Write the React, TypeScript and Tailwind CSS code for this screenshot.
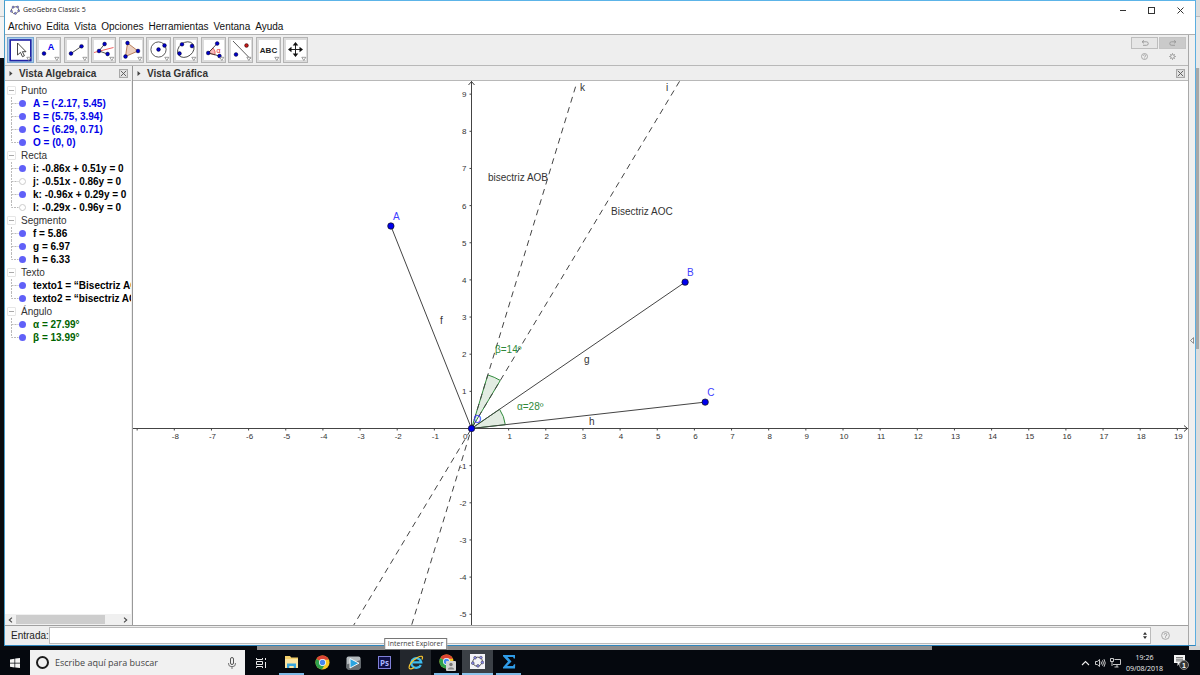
import React, { useState } from "react";

const menus = ["Archivo", "Edita", "Vista", "Opciones", "Herramientas", "Ventana", "Ayuda"];

const groups = [
  {
    name: "Punto",
    color: "text-[#0000e8]",
    items: [
      { text: "A = (-2.17, 5.45)", on: true },
      { text: "B = (5.75, 3.94)", on: true },
      { text: "C = (6.29, 0.71)", on: true },
      { text: "O = (0, 0)", on: true },
    ],
  },
  {
    name: "Recta",
    color: "text-black",
    items: [
      { text: "i: -0.86x + 0.51y = 0", on: true },
      { text: "j: -0.51x - 0.86y = 0", on: false },
      { text: "k: -0.96x + 0.29y = 0", on: true },
      { text: "l: -0.29x - 0.96y = 0", on: false },
    ],
  },
  {
    name: "Segmento",
    color: "text-black",
    items: [
      { text: "f = 5.86", on: true },
      { text: "g = 6.97", on: true },
      { text: "h = 6.33", on: true },
    ],
  },
  {
    name: "Texto",
    color: "text-black",
    items: [
      { text: "texto1 = “Bisectriz AOC”", on: true },
      { text: "texto2 = “bisectriz AOB”", on: true },
    ],
  },
  {
    name: "Ángulo",
    color: "text-[#006400]",
    items: [
      { text: "α = 27.99°", on: true },
      { text: "β = 13.99°", on: true },
    ],
  },
];

const Dot = ({ x, y, fill = "#0000c8" }: { x: number; y: number; fill?: string }) => (
  <circle cx={x} cy={y} r="1.9" fill={fill} stroke="#000" strokeWidth="0.4" />
);

const tools = [
  {
    label: "Elige y mueve",
    icon: <path d="M9.5 6v12l3-2.6 2 4.3 1.9-.9-2-4.1h3.6z" fill="#fff" stroke="#333" strokeWidth="0.9" />,
  },
  {
    label: "Punto",
    icon: (
      <>
        <Dot x={8} y={16.5} />
        <text x="15" y="13" fontSize="9" fontWeight="bold" fill="#0000ee" textAnchor="middle">A</text>
      </>
    ),
  },
  {
    label: "Recta",
    icon: (
      <>
        <path d="M7 16.5 17.5 9.3" stroke="#222" strokeWidth="0.8" />
        <Dot x={7} y={16.5} />
        <Dot x={17.5} y={9.3} />
      </>
    ),
  },
  {
    label: "Perpendicular",
    icon: (
      <>
        <path d="M3 15.5 22.5 10.5" stroke="#f05050" strokeWidth="0.9" />
        <path d="M13.6 7 8 14 16.6 17" stroke="#222" strokeWidth="0.8" fill="none" />
        <Dot x={13.6} y={7} />
        <Dot x={8} y={14} />
        <Dot x={16.6} y={17} />
      </>
    ),
  },
  {
    label: "Polígono",
    icon: (
      <>
        <path d="M8.5 6 19 14 6.5 19.5z" fill="#ecd0c0" stroke="#a8643c" strokeWidth="0.8" />
        <Dot x={8.5} y={6} />
        <Dot x={19} y={14} />
        <Dot x={6.5} y={19.5} />
      </>
    ),
  },
  {
    label: "Circunferencia",
    icon: (
      <>
        <circle cx="12.5" cy="12.5" r="7.6" fill="none" stroke="#333" strokeWidth="0.8" />
        <Dot x={12.5} y={12.5} />
        <Dot x={18.5} y={8.5} />
      </>
    ),
  },
  {
    label: "Elipse",
    icon: (
      <>
        <ellipse cx="12.8" cy="12.6" rx="9" ry="7" transform="rotate(-38 12.8 12.6)" fill="none" stroke="#333" strokeWidth="0.8" />
        <Dot x={9} y={7.3} />
        <Dot x={19} y={9} />
        <Dot x={6.5} y={16.5} />
      </>
    ),
  },
  {
    label: "Ángulo",
    icon: (
      <>
        <path d="M7.2 16 12 11a7 7 0 0 1 2 6.8z" fill="#f8b8b8" stroke="#e04040" strokeWidth="0.7" />
        <path d="M16.2 6.5 7.2 16 18.5 19" stroke="#222" strokeWidth="0.8" fill="none" />
        <text x="17.5" y="15.5" fontSize="7" fill="#e02020" textAnchor="middle">α</text>
        <Dot x={16.2} y={6.5} />
        <Dot x={7.2} y={16} />
        <Dot x={18.5} y={19} />
      </>
    ),
  },
  {
    label: "Simetría",
    icon: (
      <>
        <path d="M5 4 22.5 22" stroke="#333" strokeWidth="0.8" />
        <Dot x={8} y={17.5} />
        <Dot x={18.5} y={8.5} fill="#c01818" />
      </>
    ),
  },
  {
    label: "Texto",
    icon: <text x="12.5" y="15.8" fontSize="8" fontWeight="bold" fill="#222" textAnchor="middle">ABC</text>,
  },
  {
    label: "Desplaza vista gráfica",
    icon: (
      <>
        <path d="M12.5 7v11M7 12.5h11" stroke="#222" strokeWidth="1" />
        <path d="m12.5 5 2.8 3.5H9.7zM12.5 20l2.8-3.5H9.7zM5 12.5l3.5-2.8v5.6zM20 12.5l-3.5-2.8v5.6z" fill="#111" />
      </>
    ),
  },
];

const CloseBox = ({ label }: { label: string }) => (
  <button aria-label={label} className="flex h-[9px] w-[9px] shrink-0 items-center justify-center border border-[#a8a8a8] bg-[#e2e2e2]">
    <svg className="h-[7px] w-[7px]" viewBox="0 0 7 7">
      <path d="M.8.8l5.4 5.4M6.2.8.8 6.2" stroke="#555" strokeWidth="0.9" />
    </svg>
  </button>
);

const GeoLogo = ({ className }: { className: string }) => (
  <svg className={className} viewBox="0 0 16 16">
    <ellipse cx="8" cy="8.2" rx="6" ry="5.4" transform="rotate(-25 8 8)" fill="none" stroke="#555" strokeWidth="1.1" />
    {[[5, 3.4], [12.2, 3.2], [14, 9.2], [8.6, 13.4], [2.2, 10]].map(([x, y]) => (
      <circle key={x} cx={x} cy={y} r="1.7" fill="#8a8af0" stroke="#333" strokeWidth="0.6" />
    ))}
  </svg>
);

const AlgebraView = () => (
  <aside className="flex w-[126px] shrink-0 flex-col bg-white">
    <div className="flex h-[15px] shrink-0 items-center border-b border-[#b8b8b8] bg-[#eeeeee] pr-[3px] pl-1">
      <svg className="h-[5px] w-1" viewBox="0 0 4 5">
        <path d="M.5 0 3.5 2.5.5 5z" fill="#444" />
      </svg>
      <h2 className="ml-[6px] flex-1 text-[10px] font-bold text-[#333]">Vista Algebraica</h2>
      <CloseBox label="Cerrar vista algebraica" />
    </div>
    <div className="min-h-0 flex-1 overflow-hidden pt-[3px]">
      {groups.map((group) => (
        <section key={group.name}>
          <h3 className="flex h-[13px] items-center text-[10px] text-[#333]">
            <span className="ml-[2px] flex h-[9px] w-[9px] items-center justify-center rounded-[1px] border border-[#e6e6e6]">
              <span className="h-px w-[5px] bg-[#aaa]" />
            </span>
            <span className="ml-[5px]">{group.name}</span>
          </h3>
          <ul>
            {group.items.map((item, i) => (
              <li key={item.text} className="flex h-[13px] items-center pl-[6px] text-[10px] font-bold whitespace-nowrap">
                <svg className="h-[13px] w-2 shrink-0" viewBox="0 0 8 13">
                  <path
                    d={i === group.items.length - 1 ? "M.5 0v6.5h7" : "M.5 0v13M.5 6.5h7"}
                    fill="none"
                    stroke="#bbb"
                    strokeDasharray="2 1"
                  />
                </svg>
                <button
                  aria-label={"Mostrar " + item.text}
                  className={
                    item.on
                      ? "h-[7px] w-[7px] shrink-0 rounded-full bg-[#6060f8]"
                      : "h-[7px] w-[7px] shrink-0 rounded-full border border-[#ccc] bg-white"
                  }
                />
                <span className={"ml-[7px] " + group.color}>{item.text}</span>
              </li>
            ))}
          </ul>
        </section>
      ))}
    </div>
    <div className="flex h-[11px] shrink-0 bg-[#f0f0f0]">
      <button aria-label="Izquierda" className="flex w-[11px] items-center justify-center">
        <svg className="h-[6px] w-[5px]" viewBox="0 0 5 6">
          <path d="M4 .7 1.3 3 4 5.3" fill="none" stroke="#444" strokeWidth="1.1" />
        </svg>
      </button>
      <div className="h-[9px] flex-1">
        <div className="mt-px h-[9px] w-[86%] bg-[#cdcdcd]" />
      </div>
      <button aria-label="Derecha" className="flex w-[11px] items-center justify-center">
        <svg className="h-[6px] w-[5px]" viewBox="0 0 5 6">
          <path d="M1 .7 3.7 3 1 5.3" fill="none" stroke="#444" strokeWidth="1.1" />
        </svg>
      </button>
    </div>
  </aside>
);

// Plot origin and pixels per unit
const OX = 338.5;
const OY = 347.5;
const UNIT = 37.15;

const px = (x: number) => OX + x * UNIT;
const py = (y: number) => OY - y * UNIT;

const polar = (r: number, deg: number) => {
  const a = (deg * Math.PI) / 180;
  return `${OX + r * Math.cos(a)} ${OY - r * Math.sin(a)}`;
};

const sector = (r: number, from: number, to: number) =>
  `M${OX} ${OY}L${polar(r, from)}A${r} ${r} 0 0 0 ${polar(r, to)}Z`;

const points = [
  { name: "A", x: -2.17, y: 5.45 },
  { name: "B", x: 5.75, y: 3.94 },
  { name: "C", x: 6.29, y: 0.71 },
  { name: "O", x: 0, y: 0 },
];

const xTicks = Array.from({ length: 29 }, (_, i) => i - 9);
const yTicks = Array.from({ length: 15 }, (_, i) => i - 5).filter((n) => n !== 0);

const Plot = () => (
  <svg className="block h-full w-full" fontSize="10">
    <g fill="#dfeadf" fillOpacity="0.9" stroke="#2f8a3a" strokeWidth="1">
      <path d={sector(56, 59.08, 73.07)} />
      <path d={sector(34, 6.44, 34.42)} />
    </g>

    {/* axes */}
    <g stroke="#444" strokeWidth="1">
      <line x1="0" y1={OY} x2="100%" y2={OY} />
      <line x1={OX} y1="0" x2={OX} y2="100%" />
      {xTicks.map((n) => (
        <line key={n} x1={px(n)} x2={px(n)} y1={OY} y2={OY + 2} />
      ))}
      {yTicks.map((n) => (
        <line key={n} x1={OX - 2} x2={OX} y1={py(n)} y2={py(n)} />
      ))}
      <path d={`M${OX - 3} 4 ${OX} .5l3 3.5`} fill="none" />
    </g>
    <svg x="100%" y={OY} className="overflow-visible">
      <path d="M-4-3-.5 0-4 3" fill="none" stroke="#444" />
    </svg>
    <g fontSize="8" fill="#333">
      {xTicks.filter((n) => n > -9 && n !== 0).map((n) => (
        <text key={n} x={px(n) + 1} y={OY + 10} textAnchor="middle">{n}</text>
      ))}
      {yTicks.map((n) => (
        <text key={n} x={OX - 5} y={py(n) + 3} textAnchor="end">{n}</text>
      ))}
      <text x={OX - 4} y={OY + 10} textAnchor="end">0</text>
    </g>

    {/* bisectors */}
    <g stroke="#444" strokeWidth="1" strokeDasharray="6 4.7">
      <line x1={OX - 400} y1={OY + 400 * 1.669} x2={OX + 400} y2={OY - 400 * 1.669} />
      <line x1={OX - 200} y1={OY + 200 * 3.284} x2={OX + 104.5} y2={OY - 104.5 * 3.284} />
    </g>

    <g stroke="#444" strokeWidth="1">
      {points.slice(0, 3).map((p) => (
        <line key={p.name} x1={OX} y1={OY} x2={px(p.x)} y2={py(p.y)} />
      ))}
    </g>
    {points.map((p) => (
      <g key={p.name}>
        <text x={px(p.x) + 2} y={py(p.y) - 6} fontSize="10" fill="#4040ff">{p.name}</text>
        <circle cx={px(p.x)} cy={py(p.y)} r="3.2" fill="#0000ee" stroke="#111" strokeWidth="0.7" />
      </g>
    ))}

    <g fill="#333">
      <text x="355" y="100">bisectriz AOB</text>
      <text x="478" y="134">Bisectriz AOC</text>
      <text x="447" y="10">k</text>
      <text x="533" y="10">i</text>
      <text x="307" y="243">f</text>
      <text x="451" y="282">g</text>
      <text x="456" y="344">h</text>
    </g>
    <g fill="#2f8a3a">
      <text x="362" y="272">β=14º</text>
      <text x="384" y="329">α=28º</text>
    </g>
  </svg>
);

const GraphicsView = () => (
  <main className="flex min-w-0 flex-1 flex-col bg-white">
    <div className="flex h-[15px] shrink-0 items-center border-b border-[#b8b8b8] bg-[#eeeeee] pr-[3px] pl-1">
      <svg className="h-[5px] w-1" viewBox="0 0 4 5">
        <path d="M.5 0 3.5 2.5.5 5z" fill="#444" />
      </svg>
      <h2 className="ml-[6px] flex-1 text-[10px] font-bold text-[#333]">Vista Gráfica</h2>
      <CloseBox label="Cerrar vista gráfica" />
    </div>
    <div className="min-h-0 flex-1 overflow-hidden">
      <Plot />
    </div>
  </main>
);

const Toolbar = () => (
  <div className="flex h-[31px] shrink-0 items-center justify-between border-b border-[#b8b8b8] bg-[#eeeeee] pr-[2px] pl-[2px]">
    <div className="flex w-[301px] items-center justify-between">
      {tools.map((tool, i) => (
        <button
          key={tool.label}
          aria-label={tool.label}
          className={
            i === 0
              ? "h-[26px] w-[27px] border border-[#7aa7d0] bg-[#a9cdec]"
              : "h-[26px] w-[25px] border border-[#b4b4b4] bg-[#dcdcdc]"
          }
        >
          <svg className="mx-auto block h-6 w-[23px]" viewBox="1 1 23 24">
            {i === 0 ? (
              <rect x="2.2" y="3" width="20.6" height="20.6" fill="#fff" stroke="#2222a4" strokeWidth="1.6" />
            ) : (
              <rect x="3" y="3" width="20" height="20" fill="#fff" />
            )}
            {tool.icon}
            <path d="M18.8 20.3h4l-2 3.2z" fill="#fff" stroke="#777" strokeWidth="0.7" />
          </svg>
        </button>
      ))}
    </div>
    <div className="grid grid-cols-2 gap-x-px">
      <button aria-label="Deshace" className="flex h-3 w-[27px] items-center justify-center border border-[#bdbdbd] bg-[#e6e6e6]">
        <svg className="h-[6px] w-2" viewBox="0 0 8 6">
          <path d="M3 .3 1 1.8 3 3.3M1 1.8h4.5a1.7 1.7 0 0 1 0 3.5H2" fill="none" stroke="#999" strokeWidth="0.9" />
        </svg>
      </button>
      <button aria-label="Rehace" className="flex h-3 w-[27px] items-center justify-center border border-[#c4c4c4] bg-[#cacaca]">
        <svg className="h-[6px] w-2" viewBox="0 0 8 6">
          <path d="M5 .3 7 1.8 5 3.3M7 1.8H2.5a1.7 1.7 0 0 0 0 3.5H6" fill="none" stroke="#999" strokeWidth="0.9" />
        </svg>
      </button>
      <button aria-label="Ayuda" className="flex h-[14px] items-center justify-center">
        <svg className="h-[7px] w-[7px]" viewBox="0 0 7 7">
          <circle cx="3.5" cy="3.5" r="3" fill="none" stroke="#999" strokeWidth="0.8" />
          <path d="M2.4 2.8a1.1 1.1 0 1 1 1.1 1.1v.5M3.5 5v.6" fill="none" stroke="#999" strokeWidth="0.7" />
        </svg>
      </button>
      <button aria-label="Preferencias" className="flex h-[14px] items-center justify-center">
        <svg className="h-[7px] w-[7px]" viewBox="0 0 7 7">
          <circle cx="3.5" cy="3.5" r="1.9" fill="none" stroke="#999" strokeWidth="1" />
          <path d="M3.5 0v1.2M3.5 5.8V7M0 3.5h1.2M5.8 3.5H7M1 1l.9.9M5.1 5.1l.9.9M6 1l-.9.9M1.9 5.1 1 6" stroke="#999" strokeWidth="0.8" />
        </svg>
      </button>
    </div>
  </div>
);

const Chrome = () => (
  <svg className="h-[15px] w-[15px]" viewBox="0 0 16 16">
    <circle cx="8" cy="8" r="7.5" fill="#f7c927" />
    <path d="M8 8 1.5 4.3A7.5 7.5 0 0 1 14.8 5H8z" fill="#dc4434" />
    <path d="M8 8 1.5 4.3a7.5 7.5 0 0 0 5.8 11.2L11 9.6z" fill="#2fa24c" />
    <circle cx="8" cy="8" r="3.7" fill="#fff" />
    <circle cx="8" cy="8" r="2.9" fill="#4688f1" />
  </svg>
);

const apps = [
  {
    name: "Vista de tareas",
    slot: "",
    icon: (
      <svg className="h-3 w-3" viewBox="0 0 12 12" fill="none" stroke="#e8e8e8">
        <path d="M1.5 1v1.5h6V1M1.5 11V9.5h6V11M1.5 4.5h6v3h-6zM10.5 1v2M10.5 5v6" />
      </svg>
    ),
  },
  {
    name: "Explorador de archivos",
    slot: "mx-[3px] border-b-2 border-[#7cb8e4]",
    icon: (
      <svg className="h-[14px] w-[15px]" viewBox="0 0 15 14">
        <path d="M1 1h5l1.2 1.5H14V13H1z" fill="#f3cf6b" />
        <path d="M1 4h13v9H1z" fill="#fbe4a0" />
        <path d="M3 13V8.5h9V13H9.7v-2H5.3v2z" fill="#39a5dc" />
      </svg>
    ),
  },
  { name: "Google Chrome", slot: "", icon: <Chrome /> },
  {
    name: "Reproductor",
    slot: "",
    icon: (
      <svg className="h-[14px] w-[15px]" viewBox="0 0 15 14">
        <rect x="0.5" y="0.5" width="14" height="13" rx="2" fill="#b4babd" />
        <path d="M.5 8.5 14.5 4v7.500a2 2 0 0 1-2 2h-10a2 2 0 0 1-2-2z" fill="#6a7074" />
        <path d="M4 2.500 13 7.200 4 12z" fill="#2aa4e0" stroke="#fff" strokeWidth="0.9" />
      </svg>
    ),
  },
  {
    name: "Photoshop",
    slot: "",
    icon: (
      <span className="flex h-[13px] w-[13px] items-center justify-center border border-[#8080d8] bg-[#101048] font-['Open_Sans',sans-serif] text-[8px] leading-none font-bold text-[#a8b4ff]">
        Ps
      </span>
    ),
  },
  {
    name: "Internet Explorer",
    slot: "bg-[#23272d]",
    icon: (
      <svg className="h-[15px] w-[16px]" viewBox="0 0 16 15">
        <path d="M12.8 10a5 4.8 0 1 1 .4-2.700H4.500" fill="none" stroke="#3cbcf0" strokeWidth="2.300" />
        <path d="M14 4.500C15.500 1 13.500.3 9.500 2.500 4 5.500.500 10.500 1.200 13c.5 1.600 3 .8 5-.5" fill="none" stroke="#f4c430" strokeWidth="1.200" />
      </svg>
    ),
  },
  {
    name: "Google Chrome, perfil",
    slot: "mx-[3px] border-b-2 border-[#7cb8e4]",
    icon: (
      <span className="relative">
        <Chrome />
        <svg className="absolute -right-[2px] -bottom-[2px] h-[10px] w-[10px]" viewBox="0 0 10 10">
          <rect width="10" height="10" rx="1" fill="#d4d4d4" />
          <circle cx="5" cy="3.5" r="1.7" fill="#777" />
          <path d="M1.8 8.5C2 5.500 8 5.500 8.200 8.500z" fill="#888" />
        </svg>
      </span>
    ),
  },
  {
    name: "GeoGebra",
    slot: "border-b-2 border-[#8cc4ec] bg-[#3b4046]",
    icon: (
      <span className="bg-[#f4f4f8] p-px">
        <GeoLogo className="h-[13px] w-[13px]" />
      </span>
    ),
  },
  {
    name: "Sigma",
    slot: "mx-[3px] border-b-2 border-[#7cb8e4]",
    icon: (
      <svg className="h-[15px] w-[14px]" viewBox="0 0 14 15">
        <path d="M1 1h12v3.500h-1.200L11 3H5.500l4 4.500-4.500 4.500h6l1-1.800h1.200L13 14.500H1v-1.300l5-5.700-5-5.300z" fill="#2f9be6" />
      </svg>
    ),
  },
];

const Taskbar = () => (
  <footer className="flex h-[25px] shrink-0 items-stretch bg-[#05080e]">
    <button aria-label="Inicio" className="flex w-[30px] items-center justify-center">
      <svg className="h-[10px] w-[10px]" viewBox="0 0 10 10" fill="#f4f4f4">
        <path d="M0 1.4 4.5.7v4H0zM5.2.6 10 0v4.7H5.2zM0 5.4h4.5v4L0 8.700zM5.200 5.400H10V10l-4.800-.6z" />
      </svg>
    </button>
    <label className="flex w-[215px] items-center bg-[#f1f1f1] px-[6px]">
      <span className="h-[13px] w-[13px] shrink-0 rounded-full border-2 border-[#1c1c1c]" />
      <input
        aria-label="Buscar"
        placeholder="Escribe aquí para buscar"
        className="ml-[6px] min-w-0 flex-1 bg-transparent font-['Open_Sans',sans-serif] text-[9px] outline-none placeholder:text-[#444]"
      />
      <svg className="mr-[3px] h-3 w-2 shrink-0" viewBox="0 0 8 12" fill="none" stroke="#555">
        <rect x="2.5" y="0.5" width="3" height="7" rx="1.5" />
        <path d="M.6 6v1a2.500 2.500 0 0 0 2.500 2.500h1.800A2.500 2.500 0 0 0 7.400 7V6M4 9.500V12" strokeWidth="0.8" />
      </svg>
    </label>
    {apps.map((app) => (
      <div key={app.name} className="relative flex w-[31px] justify-center">
        <button aria-label={app.name} className={"flex flex-1 items-center justify-center " + app.slot}>
          {app.icon}
        </button>
        {app.name === "Internet Explorer" && (
          <div
            role="tooltip"
            className="absolute bottom-[25px] left-1/2 z-10 -translate-x-1/2 border border-[#767676] bg-white px-[3px] font-['Open_Sans',sans-serif] text-[7px] leading-[10px] whitespace-nowrap text-[#444]"
          >
            Internet Explorer
          </div>
        )}
      </div>
    ))}
    <div className="ml-auto flex items-center gap-1 pr-[11px] text-[#f0f0f0]">
      <svg className="h-[6px] w-[9px]" viewBox="0 0 9 6">
        <path d="M1 5 4.5 1.5 8 5" fill="none" stroke="#eee" strokeWidth="1.1" />
      </svg>
      <svg className="ml-px h-[10px] w-[11px]" viewBox="0 0 11 10" fill="none" stroke="#ddd" strokeWidth="0.9">
        <path d="M.5 3.500h1.800L4.500 1.500v7L2.300 6.500H.500zM6 3.500q1 1.500 0 3M7.500 2.300q1.800 2.700 0 5.400M9 1.200q2.500 3.800 0 7.600" />
      </svg>
      <svg className="h-[10px] w-[11px]" viewBox="0 0 11 10" fill="none" stroke="#ddd" strokeWidth="0.9">
        <path d="M4.500 1.500h6v5H3M7 6.500v2.500M4.500 9h4M.5.500h3v3h-3zM2 3.500v4.500" />
      </svg>
      <time className="w-[39px] text-center font-['Open_Sans',sans-serif] text-[7px] leading-[11px]">
        19:26
        <br />
        09/08/2018
      </time>
      <div className="relative ml-[6px] h-[15px] w-[15px]">
        <svg className="h-[11px] w-[11px]" viewBox="0 0 11 11">
          <path d="M0 0h11v8H6l-2.500 3V8H0z" fill="#f4f4f4" />
          <path d="M2 2.500h7M2 4.200h7M2 5.900h7" stroke="#444" strokeWidth="0.7" />
        </svg>
        <span className="absolute right-0 bottom-0 flex h-[10px] w-[10px] items-center justify-center rounded-full border border-[#888] bg-[#333] text-[7px] leading-none font-bold text-white">
          1
        </span>
      </div>
    </div>
  </footer>
);

export default function App() {
  const [command, setCommand] = useState("");

  return (
    <div className="flex h-screen flex-col overflow-hidden bg-[#0a0c10] font-['Liberation_Sans',Arial,sans-serif]">
      <div className="flex min-h-0 flex-1">
        <div className="flex w-1 shrink-0 flex-col">
          <div className="h-[17px] border-b border-[#bbb] bg-[#eee]" />
          <div className="h-[41px] bg-[#f4f4f4]" />
        </div>

        <div className="flex min-w-0 flex-1 flex-col border-t border-r border-b border-l border-t-[#5cb4e8] border-r-[#5caee0] border-b-[#2f86bd] border-l-[#4a9cc8] bg-[#eeeeee]">
          <header className="shrink-0 bg-white">
            <div className="flex h-[18px] items-center pl-[5px]">
              <GeoLogo className="h-[10px] w-[10px]" />
              <span className="ml-[3px] flex-1 font-['Open_Sans',sans-serif] text-[7px] text-[#222]">GeoGebra Classic 5</span>
              <div className="flex">
                <button aria-label="Minimizar" className="flex w-[29px] items-center justify-center">
                  <span className="h-px w-[6px] bg-[#333]" />
                </button>
                <button aria-label="Maximizar" className="flex w-[29px] items-center justify-center">
                  <span className="h-[7px] w-[7px] border border-[#333]" />
                </button>
                <button aria-label="Cerrar" className="flex w-[29px] items-center justify-center">
                  <svg className="h-[7px] w-[7px]" viewBox="0 0 7 7">
                    <path d="m.5.5 6 6M6.5.5l-6 6" stroke="#333" />
                  </svg>
                </button>
              </div>
            </div>
            <nav className="flex h-[15px] items-center gap-[5px] pl-[3px] text-[10px] leading-none text-[#111]">
              {menus.map((menu) => (
                <button key={menu}>{menu}</button>
              ))}
            </nav>
          </header>

          <div className="flex min-h-0 flex-1 border-t border-[#b0b0b0]">
            <div className="flex min-w-0 flex-1 flex-col border-r border-[#a8a8a8]">
              <Toolbar />
              <div className="flex min-h-0 flex-1">
                <AlgebraView />
                <div className="w-[2px] shrink-0 border-r border-[#999] bg-[#eeeeee]" />
                <GraphicsView />
              </div>
              <div className="flex h-5 shrink-0 items-center border-t border-[#a0a0a0] bg-[#eeeeee] pr-[18px] pl-[6px]">
                <label htmlFor="entrada" className="text-[10px] text-[#222]">Entrada:</label>
                <div className="flex h-[17px] flex-1 items-center border border-[#bbb] bg-white pr-[3px]">
                  <input
                    id="entrada"
                    value={command}
                    onChange={(e) => setCommand(e.target.value)}
                    className="h-full min-w-0 flex-1 px-1 text-[10px] outline-none"
                  />
                  <button aria-label="Historial">
                    <svg className="h-[7px] w-1" viewBox="0 0 4 7">
                      <path d="M2 0l2 2.8H0zM2 7l2-2.8H0z" fill="#333" />
                    </svg>
                  </button>
                </div>
                <button aria-label="Ayuda de entrada" className="ml-[10px]">
                  <svg className="h-[9px] w-[9px]" viewBox="0 0 9 9" fill="none" stroke="#999">
                    <circle cx="4.5" cy="4.5" r="3.9" strokeWidth="0.8" />
                    <path d="M3.2 3.7a1.3 1.3 0 1 1 1.3 1.3v.6M4.5 6.300v.8" strokeWidth="0.9" />
                  </svg>
                </button>
              </div>
            </div>
            <div className="flex w-[6px] shrink-0 items-center justify-center bg-[#f0f0f0]">
              <button aria-label="Mostrar apariencias">
                <svg className="h-[7px] w-1" viewBox="0 0 4 7">
                  <path d="M3.6.7v5.6L.5 3.5z" fill="#fff" stroke="#555" strokeWidth="0.7" />
                </svg>
              </button>
            </div>
          </div>
        </div>

        <div className="flex w-1 shrink-0 flex-col bg-[#dcdcdc]">
          <div className="h-[17px] border-b border-[#bbb]" />
          <div className="h-[51px] bg-[#e8e8e8]" />
          <div className="mr-px h-[281px] bg-[#a8a8a8]" />
        </div>
      </div>

      <div className="flex h-1 shrink-0">
        <div className="w-[257px]" />
        <div className="h-full w-[675px] bg-[#8f8f8f]" />
        <div className="ml-auto w-[11px] bg-[#d4d4d4]" />
      </div>
      <Taskbar />
    </div>
  );
}
